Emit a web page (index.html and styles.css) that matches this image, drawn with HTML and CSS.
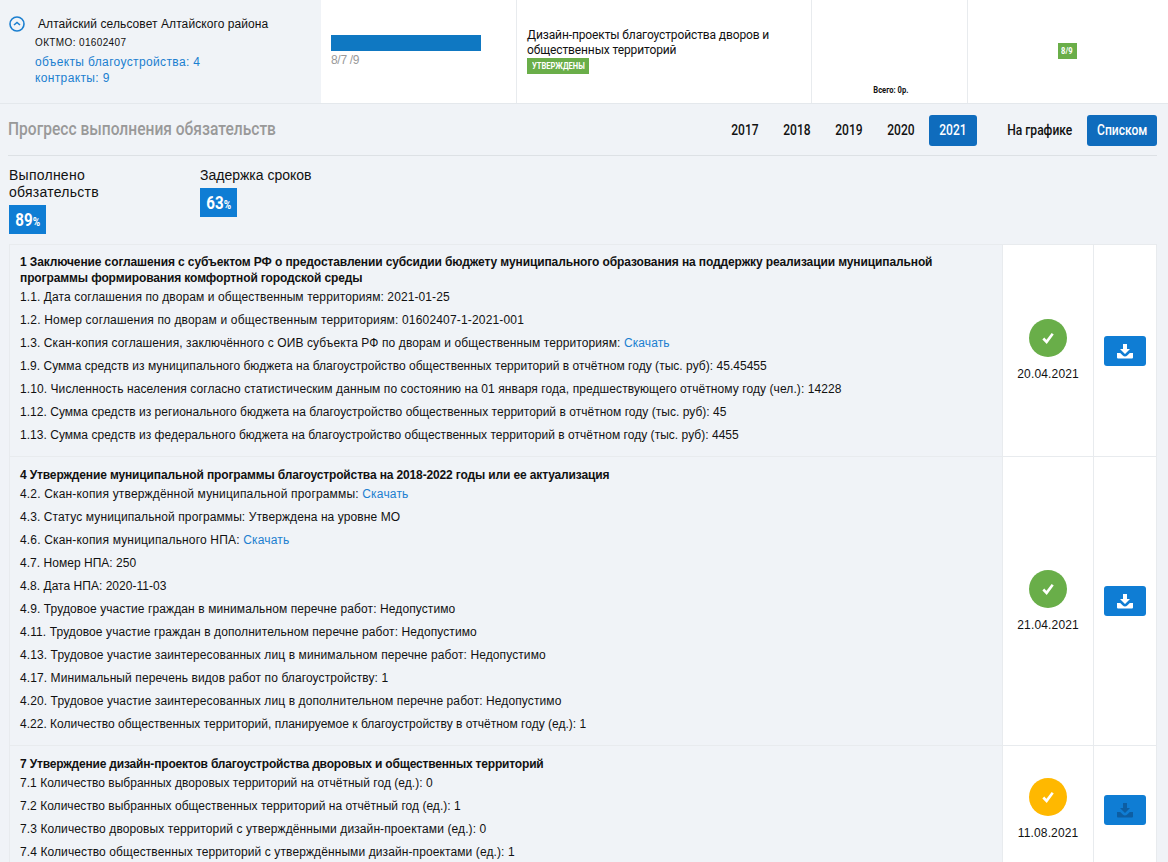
FILE: index.html
```html
<!DOCTYPE html>
<html lang="ru">
<head>
<meta charset="utf-8">
<title>Прогресс выполнения обязательств</title>
<link rel="stylesheet" href="styles.css">
</head>
<body>
<svg class="defs" width="0" height="0" aria-hidden="true">
  <symbol id="dl" viewBox="0 0 16 16">
    <path d="M6 1h4v5h3l-5 5-5-5h3z"/>
    <path d="M0 10h3.2l2.6 2.600c1.200 1.200 3.200 1.200 4.400 0L12.800 10H16v4.500a1 1 0 0 1-1 1H1a1 1 0 0 1-1-1z"/>
  </symbol>
  <symbol id="ok" viewBox="0 0 12 12">
    <path d="M1.300 6.500 4.600 9.900 10.700 1.800" fill="none" stroke="#fff" stroke-width="2.600"/>
  </symbol>
</svg>
<section class="head">
  <div class="region">
    <svg class="toggle" viewBox="0 0 16 16"><circle cx="8" cy="8" r="7" fill="none" stroke="#1b7fd0" stroke-width="1.600"/><path d="M5 9l3-2.500L11 9" fill="none" stroke="#1b7fd0" stroke-width="1.600"/></svg>
    <div class="region-body">
      <div class="region-name">Алтайский сельсовет Алтайского района</div>
      <div class="oktmo">ОКТМО: 01602407</div>
      <div class="links"><div>объекты благоустройства: 4</div><div>контракты: 9</div></div>
    </div>
  </div>
  <div class="cell c-bar"><div class="bar"></div><div class="bar-label">8/7 /9</div></div>
  <div class="cell c-design">
    <div class="design-title">Дизайн-проекты благоустройства дворов и общественных территорий</div>
    <div class="tag"><span class="cond">УТВЕРЖДЕНЫ</span></div>
  </div>
  <div class="cell c-total"><span class="cond">Всего: 0р.</span></div>
  <div class="cell c-count"><div class="count"><span class="cond">8/9</span></div></div>
</section>
<section class="toolbar">
  <h2><span class="cond">Прогресс выполнения обязательств</span></h2>
  <nav class="years">
    <a><span class="cond">2017</span></a><a><span class="cond">2018</span></a><a><span class="cond">2019</span></a><a><span class="cond">2020</span></a><a class="on"><span class="cond">2021</span></a>
  </nav>
  <nav class="views"><a><span class="cond">На графике</span></a><a class="on"><span class="cond">Списком</span></a></nav>
</section>
<section class="stats">
  <div class="stat s1"><div class="stat-label">Выполнено обязательств</div><div class="pct"><span class="cond">89<small>%</small></span></div></div>
  <div class="stat s2"><div class="stat-label">Задержка сроков</div><div class="pct"><span class="cond">63<small>%</small></span></div></div>
</section>
<section class="list">
  <article class="row r1">
    <div class="main">
      <h3>1 Заключение соглашения с субъектом РФ о предоставлении субсидии бюджету муниципального образования на поддержку реализации муниципальной программы формирования комфортной городской среды</h3>
      <p>1.1. Дата соглашения по дворам и общественным территориям: 2021-01-25</p>
      <p class="w">1.2. Номер соглашения по дворам и общественным территориям: 01602407-1-2021-001</p>
      <p>1.3. Скан-копия соглашения, заключённого с ОИВ субъекта РФ по дворам и общественным территориям: <a>Скачать</a></p>
      <p class="t">1.9. Сумма средств из муниципального бюджета на благоустройство общественных территорий в отчётном году (тыс. руб): 45.45455</p>
      <p class="m">1.10. Численность населения согласно статистическим данным по состоянию на 01 января года, предшествующего отчётному году (чел.): 14228</p>
      <p class="t">1.12. Сумма средств из регионального бюджета на благоустройство общественных территорий в отчётном году (тыс. руб): 45</p>
      <p class="t">1.13. Сумма средств из федерального бюджета на благоустройство общественных территорий в отчётном году (тыс. руб): 4455</p>
    </div>
    <div class="date"><svg class="status green" viewBox="0 0 38 38"><circle cx="19" cy="19" r="19"/><use href="#ok" x="13" y="13" width="12" height="12"/></svg><span>20.04.2021</span></div>
    <div class="action"><button class="dl"><svg viewBox="0 0 16 16"><use href="#dl"/></svg></button></div>
  </article>
  <article class="row r2">
    <div class="main">
      <h3>4 Утверждение муниципальной программы благоустройства на 2018-2022 годы или ее актуализация</h3>
      <p class="w">4.2. Скан-копия утверждённой муниципальной программы: <a>Скачать</a></p>
      <p>4.3. Статус муниципальной программы: Утверждена на уровне МО</p>
      <p class="w">4.6. Скан-копия муниципального НПА: <a>Скачать</a></p>
      <p class="t">4.7. Номер НПА: 250</p>
      <p class="t">4.8. Дата НПА: 2020-11-03</p>
      <p>4.9. Трудовое участие граждан в минимальном перечне работ: Недопустимо</p>
      <p>4.11. Трудовое участие граждан в дополнительном перечне работ: Недопустимо</p>
      <p>4.13. Трудовое участие заинтересованных лиц в минимальном перечне работ: Недопустимо</p>
      <p>4.17. Минимальный перечень видов работ по благоустройству: 1</p>
      <p>4.20. Трудовое участие заинтересованных лиц в дополнительном перечне работ: Недопустимо</p>
      <p class="z">4.22. Количество общественных территорий, планируемое к благоустройству в отчётном году (ед.): 1</p>
    </div>
    <div class="date"><svg class="status green" viewBox="0 0 38 38"><circle cx="19" cy="19" r="19"/><use href="#ok" x="13" y="13" width="12" height="12"/></svg><span>21.04.2021</span></div>
    <div class="action"><button class="dl"><svg viewBox="0 0 16 16"><use href="#dl"/></svg></button></div>
  </article>
  <article class="row r3">
    <div class="main">
      <h3>7 Утверждение дизайн-проектов благоустройства дворовых и общественных территорий</h3>
      <p class="t">7.1 Количество выбранных дворовых территорий на отчётный год (ед.): 0</p>
      <p class="t">7.2 Количество выбранных общественных территорий на отчётный год (ед.): 1</p>
      <p>7.3 Количество дворовых территорий с утверждёнными дизайн-проектами (ед.): 0</p>
      <p>7.4 Количество общественных территорий с утверждёнными дизайн-проектами (ед.): 1</p>
    </div>
    <div class="date"><svg class="status yellow" viewBox="0 0 38 38"><circle cx="19" cy="19" r="19"/><use href="#ok" x="13" y="13" width="12" height="12"/></svg><span>11.08.2021</span></div>
    <div class="action"><button class="dl off"><svg viewBox="0 0 16 16"><use href="#dl"/></svg></button></div>
  </article>
</section>
</body>
</html>
```
FILE: styles.css
```css
* { box-sizing: border-box; }
html, body { margin: 0; height: 862px; overflow: hidden; }
body { background: #f0f3f7; color: #111; font: 12px/16px "Liberation Sans", Arial, sans-serif; }
.defs { position: absolute; }
.cond { display: inline-block; white-space: nowrap; flex: none; transform: scaleX(.84); }

.head { display: flex; height: 104px; border-bottom: 1px solid #e4e8ec; }
.region { width: 321px; display: flex; padding: 16px 0 0 9px; }
.toggle { width: 16px; height: 16px; flex: none; }
.region-body { margin-left: 10px; }
.region-name { margin-left: 3px; height: 16px; letter-spacing: .08px; }
.oktmo { font-size: 10px; line-height: 14px; margin-top: 4px; letter-spacing: .37px; }
.links { margin-top: 4px; color: #1b7fd0; letter-spacing: .36px; }
.cell { background: #fff; border-right: 1px solid #e8ebee; height: 103px; }
.c-bar { width: 196px; padding: 35px 10px 0; }
.bar { width: 150px; height: 16px; background: #0f78c2; }
.bar-label { color: #999; margin-top: 1px; line-height: 16px; letter-spacing: -.3px; }
.c-design { width: 295px; padding: 28px 10px 0; }
.design-title { font-family: Roboto, sans-serif; line-height: 15px; letter-spacing: -.12px; }
.tag { display: flex; justify-content: center; width: 62px; height: 16px; background: #6aae49; color: #fff; font: bold 9px/16px Roboto, sans-serif; }
.c-total { width: 156px; display: flex; justify-content: center; padding: 82px 0 0 2px; font: bold 9px/16px Roboto, sans-serif; }
.c-count { flex: 1; border-right: 0; display: flex; justify-content: center; padding: 43px 2px 0 0; }
.count { display: flex; justify-content: center; width: 19px; height: 16px; background: #6aae49; color: #fff; font: bold 9px/16px Roboto, sans-serif; }

.toolbar { display: flex; align-items: center; height: 52px; margin: 0 11px 0 8px; padding-top: 1px; border-bottom: 1px solid #dde1e5; font-family: Roboto, sans-serif; }
.toolbar h2 { margin: -2px auto 0 0; font-size: 18px; font-weight: 500; color: #999; line-height: 24px; }
.toolbar h2 .cond { transform-origin: left center; transform: scaleX(.865); }
.toolbar a { display: flex; justify-content: center; height: 31px; font-size: 14px; font-weight: 500; line-height: 31px; border-radius: 3px; }
.toolbar a .cond { transform: scaleX(.86); }
.toolbar a.on { background: #0f6cbd; color: #fff; }
.years { display: flex; margin-right: 30px; }
.years a { width: 52px; }
.years a.on { width: 48px; margin-left: 2px; }
.views { display: flex; gap: 15px; }
.views a { width: 65px; }
.views a.on { width: 70px; }

.stats { display: flex; padding: 11px 0 0 9px; height: 88px; }
.stat-label { font-size: 14px; line-height: 17px; }
.s1 { width: 191px; }
.s1 .stat-label { width: 110px; letter-spacing: .25px; }
.pct { display: flex; justify-content: center; margin-top: 4px; width: 37px; height: 29px; background: #0f7dd4; color: #fff; font: bold 18px/29px Roboto, sans-serif; }
.pct small { font-size: 12px; }

.list { margin: 0 11px 0 9px; border-top: 1px solid #e8ebee; }
.row { display: flex; border-bottom: 1px solid #e8ebee; }
.r1 { height: 212px; }
.r2 { height: 289px; }
.r3 { height: 200px; }
.main { width: 994px; padding: 10px 10px 0; border-left: 1px solid #e8ebee; }
.r1 .main { padding-top: 9px; }
h3 { margin: 0 0 3px; font-size: 12px; line-height: 16px; letter-spacing: -.14px; }
.r1 h3 { letter-spacing: -.11px; }
.r3 h3 { letter-spacing: -.18px; }
.main p { margin: 0 0 7px; line-height: 16px; letter-spacing: .1px; }
.main p.t { letter-spacing: .03px; }
.main p.z { letter-spacing: .01px; }
.main p.m { letter-spacing: .085px; }
.main p.w { letter-spacing: .17px; }
.main a { color: #1b7fd0; }
.date { width: 91px; background: #fff; border-left: 1px solid #e8ebee; display: flex; flex-direction: column; align-items: center; letter-spacing: .15px; }
.r1 .date { padding-top: 74px; }
.r2 .date { padding-top: 113px; }
.r3 .date { padding-top: 32px; }
.status { width: 38px; height: 38px; display: block; margin-bottom: 9px; }
.green { fill: #69ae49; }
.yellow { fill: #ffb800; }
.action { width: 64px; background: #fff; border-left: 1px solid #e8ebee; border-right: 1px solid #e8ebee; padding-left: 10px; }
.r1 .action { padding-top: 91px; }
.r2 .action { padding-top: 129px; }
.r3 .action { padding-top: 49px; }
.dl { display: flex; align-items: center; justify-content: center; width: 42px; height: 30px; border: 0; padding: 0; border-radius: 3px; background: #0f7dd4; fill: #fff; }
.dl svg { width: 16px; height: 16px; display: block; }
.dl.off { fill: #0d5ea3; }
```
